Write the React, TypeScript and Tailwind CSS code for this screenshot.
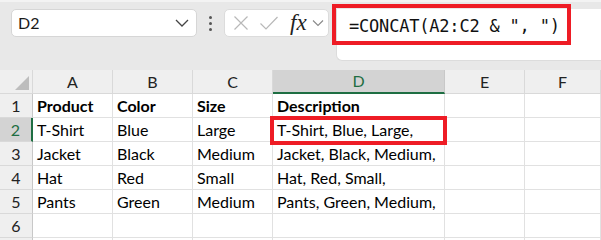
import React from "react";

const cols = [33, 80, 80, 80, 172, 80, 76];
const headers = ["A", "B", "C", "D", "E", "F"];
const rows: string[][] = [
  ["Product", "Color", "Size", "Description", "", ""],
  ["T-Shirt", "Blue", "Large", "T-Shirt, Blue, Large,", "", ""],
  ["Jacket", "Black", "Medium", "Jacket, Black, Medium,", "", ""],
  ["Hat", "Red", "Small", "Hat, Red, Small,", "", ""],
  ["Pants", "Green", "Medium", "Pants, Green, Medium,", "", ""],
  ["", "", "", "", "", ""],
  ["", "", "", "", "", ""],
];

const font = { fontFamily: "Lato, 'Noto Sans', sans-serif" };

export default function App() {
  return (
    <div className="w-[601px] h-[240px] overflow-hidden bg-[#e8e8e8] relative" style={font}>
      {/* toolbar */}
      <div className="relative h-[70px] border-t-[2px] border-[#f3f3f3]">
        <div className="flex items-start pt-[7px] pl-[11px]">
          <div className="w-[186px] h-[28px] bg-white rounded-[5px] border border-[#d6d6d6] flex items-center justify-between pl-[6px] pr-[6px]">
            <span className="text-[16px] text-[#1a1a1a]">D2</span>
            <svg width="14" height="8" viewBox="0 0 14 8" className="mr-[1px]">
              <path d="M1 1 L7 7 L13 1" fill="none" stroke="#444" strokeWidth="1.3" />
            </svg>
          </div>
          <div className="w-[27px] h-[28px] flex flex-col items-center justify-center gap-[3px]">
            <div className="w-[3px] h-[3px] bg-[#555] rounded-full" />
            <div className="w-[3px] h-[3px] bg-[#555] rounded-full" />
            <div className="w-[3px] h-[3px] bg-[#555] rounded-full" />
          </div>
          <div className="w-[105px] h-[28px] bg-white rounded-[5px] border border-[#dcdcdc] flex items-center pl-[8px]">
            <svg width="16" height="16" viewBox="0 0 16 16">
              <path d="M1.5 1.5 L14.5 14.5 M14.5 1.5 L1.5 14.5" stroke="#b8b8b8" strokeWidth="1.2" />
            </svg>
            <svg width="20" height="16" viewBox="0 0 20 16" className="ml-[10px]">
              <path d="M1.5 8.5 L7 14 L18.5 2" fill="none" stroke="#b8b8b8" strokeWidth="1.2" />
            </svg>
            <span className="ml-[11px] text-[23px] italic text-[#222] leading-none -mt-[2px]" style={{ fontFamily: "'Liberation Serif', serif" }}>
              fx
            </span>
            <svg width="12" height="8" viewBox="0 0 12 8" className="ml-[5px]">
              <path d="M1 1.5 L6 6.5 L11 1.5" fill="none" stroke="#888" strokeWidth="1.1" />
            </svg>
          </div>
          <div className="ml-[7px] flex-1 h-[52px] bg-white rounded-bl-[6px] border-l border-b border-[#dcdcdc] flex items-start pl-[12px] pt-[5px]">
            <span
              className="text-[17px] tracking-[-0.2px] text-[#111] whitespace-pre"
              style={{ fontFamily: "'DejaVu Sans Mono', monospace" }}
            >
              =CONCAT(A2:C2 &amp; ", ")
            </span>
          </div>
        </div>
        <div className="absolute left-[332px] top-[2px] w-[239px] h-[41px] border-[4px] border-[#ee1c25]" />
      </div>

      {/* sheet */}
      <div
        className="grid bg-white"
        style={{ gridTemplateColumns: cols.map((c) => c + "px").join(" ") }}
      >
        {/* header row */}
        <div className="h-[24px] bg-[#efefef] border-r border-b border-[#d9d9d9] relative">
          <svg width="14" height="14" viewBox="0 0 14 14" className="absolute right-[3px] bottom-[3px]">
            <path d="M14 0 L14 14 L0 14 Z" fill="#bdbdbd" />
          </svg>
        </div>
        {headers.map((h) =>
          h === "D" ? (
            <div
              key={h}
              className="h-[24px] bg-[#d3d3d3] border-r border-[#c8c8c8] border-b-[2px] border-b-[#1e6e42] flex items-center justify-center text-[16px] text-[#1e6e42]"
            >
              {h}
            </div>
          ) : (
            <div
              key={h}
              className="h-[24px] bg-[#efefef] border-r border-b border-[#d9d9d9] flex items-center justify-center text-[16px] text-[#222]"
            >
              {h}
            </div>
          )
        )}
        {rows.map((r, i) => (
          <React.Fragment key={i}>
            <div
              className={
                "h-[24px] border-b border-[#d9d9d9] flex items-center justify-center text-[16px] " +
                (i === 1
                  ? "bg-[#d3d3d3] border-r-[2px] border-r-[#1e6e42] text-[#1e6e42]"
                  : "bg-[#efefef] border-r border-r-[#c8c8c8] text-[#222]")
              }
            >
              {i < 6 ? i + 1 : ""}
            </div>
            {r.map((c, j) => (
              <div
                key={j}
                className={
                  "h-[24px] border-r border-b border-[#e1e1e1] flex items-center pl-[4px] text-[16px] text-black whitespace-nowrap overflow-visible " +
                  (i === 0 ? "font-bold" : "")
                }
              >
                {c}
              </div>
            ))}
          </React.Fragment>
        ))}
      </div>
      <div className="absolute left-[270px] top-[116px] w-[177px] h-[29px] border-[4px] border-[#ee1c25]" />
    </div>
  );
}
